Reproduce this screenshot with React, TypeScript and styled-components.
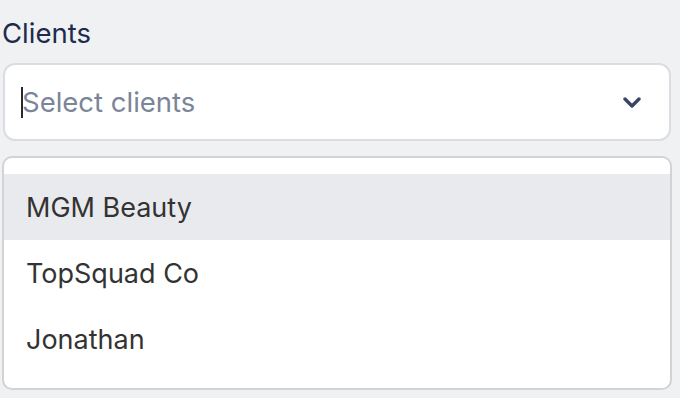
import React from 'react';
import styled, { createGlobalStyle } from 'styled-components';

const GlobalStyle = createGlobalStyle`
  body {
    margin: 0;
    background: #f0f1f3;
    font-family: Inter, "Noto Sans", sans-serif;
  }
`;

const Page = styled.div`
  width: 680px;
  height: 398px;
  overflow: hidden;
  padding: 18px 0 0 2px;
  box-sizing: border-box;
`;

const Label = styled.div`
  font-size: 27.5px;
  line-height: 30px;
  color: #1f2b4d;
`;

const Field = styled.div`
  margin: 15px 0 0 1px;
  width: 668px;
  height: 78px;
  box-sizing: border-box;
  border: 2px solid #dcdde0;
  border-radius: 12px;
  background: #fff;
  display: flex;
  align-items: center;
  padding: 0 28px 0 16px;
`;

const Caret = styled.span`
  width: 2px;
  height: 31px;
  background: #2a2a2a;
  margin-right: -1px;
`;

const Placeholder = styled.span`
  flex: 1;
  font-size: 27.5px;
  color: #7b8599;
`;

const Menu = styled.div`
  margin-top: 15px;
  width: 670px;
  box-sizing: border-box;
  border: 2px solid #d2d3d6;
  border-radius: 10px;
  background: #fff;
  padding: 16px 0 16px;
`;

const Option = styled.div<{ $active?: boolean }>`
  height: 66px;
  display: flex;
  align-items: center;
  padding-left: 22px;
  font-size: 27px;
  color: #333;
  background: ${(p) => (p.$active ? '#e9eaed' : 'transparent')};
`;

const Chevron = () => (
  <svg width="18" height="11" viewBox="0 0 18 11">
    <path d="M2 2l7 7 7-7" fill="none" stroke="#3a4764" strokeWidth="3.4" strokeLinecap="round" strokeLinejoin="round" />
  </svg>
);

const clients = ['MGM Beauty', 'TopSquad Co', 'Jonathan'];

export default function App() {
  return (
    <Page>
      <GlobalStyle />
      <Label>Clients</Label>
      <Field>
        <Caret />
        <Placeholder>Select clients</Placeholder>
        <Chevron />
      </Field>
      <Menu>
        {clients.map((c, i) => (
          <Option key={c} $active={i === 0}>
            {c}
          </Option>
        ))}
      </Menu>
    </Page>
  );
}
